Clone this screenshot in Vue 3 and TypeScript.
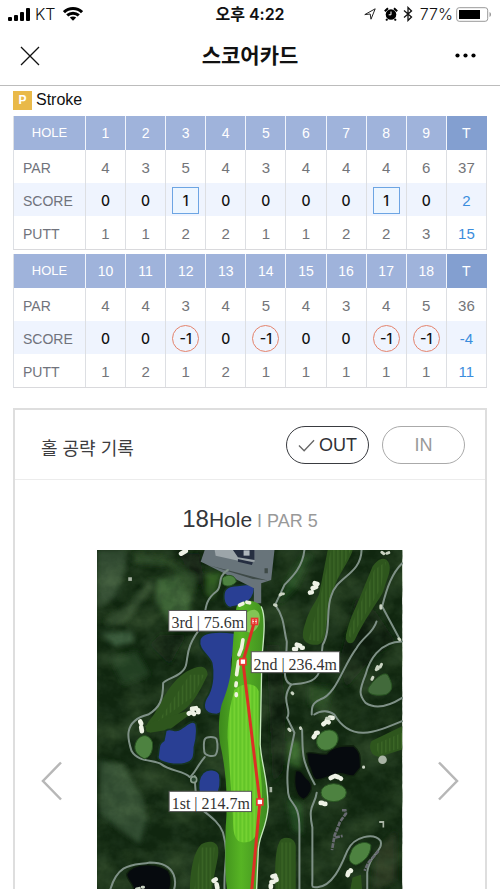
<script setup lang="ts">
import { ref } from 'vue'

interface Nine {
  holes: number[]
  par: number[]
  score: number[]
  putt: number[]
  totals: { par: number; score: number; putt: number }
}

const nines: Nine[] = [
  {
    holes: [1, 2, 3, 4, 5, 6, 7, 8, 9],
    par: [4, 3, 5, 4, 3, 4, 4, 4, 6],
    score: [0, 0, 1, 0, 0, 0, 0, 1, 0],
    putt: [1, 1, 2, 2, 1, 1, 2, 2, 3],
    totals: { par: 37, score: 2, putt: 15 },
  },
  {
    holes: [10, 11, 12, 13, 14, 15, 16, 17, 18],
    par: [4, 4, 3, 4, 5, 4, 3, 4, 5],
    score: [0, 0, -1, 0, -1, 0, 0, -1, -1],
    putt: [1, 2, 1, 2, 1, 1, 1, 1, 1],
    totals: { par: 36, score: -4, putt: 11 },
  },
]

type Course = 'OUT' | 'IN'
const courses: Course[] = ['OUT', 'IN']
const selected = ref<Course>('OUT')

function markClass(score: number): string {
  if (score > 0) return 'mark over'
  if (score < 0) return 'mark under'
  return 'mark'
}
</script>

<template>
  <div class="screen">
    <div class="status">
      <div class="status-side">
        <svg class="signal" viewBox="0 0 22 13" aria-hidden="true">
          <rect x="0" y="9" width="4" height="4" rx="1" />
          <rect x="6" y="7" width="4" height="6" rx="1" />
          <rect x="12" y="4" width="4" height="9" rx="1" />
          <rect x="18" y="0" width="4" height="13" rx="1" />
        </svg>
        <span>KT</span>
        <svg class="wifi" viewBox="0 0 20 14" aria-hidden="true">
          <path d="M1 5.2C6 .4 14 .4 19 5.2" />
          <path d="M4.2 8.4c3.3-3 8.3-3 11.600 0" />
          <path d="M6.800 10.600c1.800-1.600 4.600-1.600 6.400 0L10 13.800z" class="dot" />
        </svg>
      </div>
      <div class="time">오후 4:22</div>
      <div class="status-side right">
        <svg class="location" viewBox="0 0 12 12" aria-hidden="true">
          <path d="M.8 6.600 11.200.8 7 11.200 6.200 6z" />
        </svg>
        <svg class="alarm" viewBox="0 0 14 14" aria-hidden="true">
          <circle cx="7" cy="7.500" r="5.300" />
          <path d="M.8 4.200 4 1.200M13.200 4.200 10 1.200M3.200 12l-1 1.500M10.800 12l1 1.500" class="line" />
          <path d="M7 4.500v3.300H4.700" class="hand" />
        </svg>
        <svg class="bluetooth" viewBox="0 0 10 16" aria-hidden="true">
          <path d="M1 4.500 8.500 11 5 14.500V1.500L8.500 5 1 11.500" />
        </svg>
        <span>77%</span>
        <svg class="battery" viewBox="0 0 36 15" aria-hidden="true">
          <rect x=".7" y=".7" width="31" height="13.600" rx="2.500" class="case" />
          <rect x="3" y="3" width="21" height="9" />
          <path d="M33.500 5v5c2-.8 2-4.200 0-5z" class="tip" />
        </svg>
      </div>
    </div>

    <header class="nav">
      <button type="button" class="icon-button" aria-label="닫기">
        <svg class="close" viewBox="0 0 20 20" aria-hidden="true"><path d="M1 1l18 18M19 1 1 19" /></svg>
      </button>
      <h1>스코어카드</h1>
      <button type="button" class="icon-button end" aria-label="더보기">
        <svg class="more" viewBox="0 0 21 5" aria-hidden="true">
          <circle cx="2.500" cy="2.500" r="2.100" />
          <circle cx="10.500" cy="2.500" r="2.100" />
          <circle cx="18.500" cy="2.500" r="2.100" />
        </svg>
      </button>
    </header>

    <main class="content">
      <div class="mode"><span class="badge">P</span>Stroke</div>

      <div class="tables">
        <table v-for="(nine, n) in nines" :key="n">
          <thead>
            <tr>
              <th scope="col" class="name">HOLE</th>
              <th v-for="hole in nine.holes" :key="hole" scope="col">{{ hole }}</th>
              <th scope="col" class="total">T</th>
            </tr>
          </thead>
          <tbody>
            <tr>
              <th scope="row">PAR</th>
              <td v-for="(v, i) in nine.par" :key="i">{{ v }}</td>
              <td>{{ nine.totals.par }}</td>
            </tr>
            <tr class="score">
              <th scope="row">SCORE</th>
              <td v-for="(v, i) in nine.score" :key="i"><span :class="markClass(v)">{{ v }}</span></td>
              <td class="sum">{{ nine.totals.score }}</td>
            </tr>
            <tr>
              <th scope="row">PUTT</th>
              <td v-for="(v, i) in nine.putt" :key="i">{{ v }}</td>
              <td class="sum">{{ nine.totals.putt }}</td>
            </tr>
          </tbody>
        </table>
      </div>

      <section class="card">
        <div class="card-head">
          <h2>홀 공략 기록</h2>
          <div class="toggle">
            <button
              v-for="course in courses"
              :key="course"
              type="button"
              :class="['pill', { active: selected === course }]"
              :aria-pressed="selected === course"
              @click="selected = course"
            >
              <svg v-if="selected === course" class="check" viewBox="0 0 18 13" aria-hidden="true">
                <path d="M1 6.500 6.500 12 17 1" />
              </svg>
              {{ course }}
            </button>
          </div>
        </div>

        <p class="hole-title"><span class="number">18</span><span class="word">Hole</span><span class="par">I PAR 5</span></p>

        <div class="viewer">
          <button type="button" class="arrow" aria-label="이전 홀">
            <svg viewBox="0 0 22 40" aria-hidden="true"><path d="M20 1.500 2 20l18 18.500" /></svg>
          </button>

          <svg class="map" viewBox="21 15 918 1392" role="img" aria-label="18번 홀 코스">
            <defs>
              <pattern id="mow" width="12" height="12" patternUnits="userSpaceOnUse">
                <rect width="4" height="12" fill="#b8ff58" opacity=".3" />
              </pattern>
              <pattern id="mow-dim" width="12" height="12" patternUnits="userSpaceOnUse">
                <rect width="4" height="12" fill="#699b45" opacity=".25" />
              </pattern>
              <linearGradient id="main-grass" x1="0" y1="0" x2="1" y2="0">
                <stop offset="0" stop-color="#3c891c" />
                <stop offset=".45" stop-color="#57b424" />
                <stop offset="1" stop-color="#3e8a20" />
              </linearGradient>
              <filter id="foliage" x="0" y="0" width="1" height="1">
                <feTurbulence type="fractalNoise" baseFrequency=".009 .012" numOctaves="5" seed="9" />
                <feColorMatrix values="0 0 0 0 .2  0 0 0 0 .34  0 0 0 0 .14  1.800 0 0 0 -.68" />
              </filter>
              <filter id="shadow" x="0" y="0" width="1" height="1">
                <feTurbulence type="fractalNoise" baseFrequency=".025" numOctaves="4" seed="4" />
                <feColorMatrix values="0 0 0 0 .02  0 0 0 0 .05  0 0 0 0 .02  0 2.200 0 0 -.85" />
              </filter>
              <filter id="soft"><feGaussianBlur stdDeviation="8" /></filter>
            </defs>

            <rect x="21" y="15" width="918" height="1392" fill="#10260f" />

            <g filter="url(#soft)">
              <path d="M21 15h90l-5 60-30 85-55 25z" fill="#324b33" />
              <path d="M200 105l60-15 45 65-10 60-55 20-40-60z" fill="#385e30" />
              <path d="M130 25l100 15 90 55-10 60-70-90-110-10z" fill="#274420" />
              <path d="M30 265l95-5 10 30-60 15z" fill="#3b5b3c" />
              <path d="M40 230l90-60 50-70 10 30-90 110z" fill="#2d472a" />
              <path d="M60 340l80-20 40 70-80 30z" fill="#213f24" />
              <path d="M30 650l70 10 60 110 10 60-20 70-120-90z" fill="#304e33" />
              <path d="M350 85l50-5-30 80-20-10z" fill="#315d24" />
              <path d="M260 25l70 0 20 120-40-60z" fill="#09180b" />
              <path d="M210 270l80 0-50 90-60-60z" fill="#0b1e10" />
              <path d="M640 30l30 0-50 100-50 50 20-70z" fill="#1f451b" />
              <path d="M600 590l30 0 5 80-40-10z" fill="#336525" />
              <path d="M660 420l70 10-20 70-50-20z" fill="#20451d" />
              <path d="M590 760l50 20 0 90-30-10z" fill="#244b20" />
              <path d="M860 920l60-60v150l-70 30z" fill="#26331e" />
              <path d="M530 300l40 0 20 200-10 180-30 40z" fill="#0a1c0b" />
              <path d="M800 160l60 40 60 90-70 50-80 90-20-80z" fill="#0b1b0c" />
            </g>
            <rect x="21" y="15" width="918" height="1392" filter="url(#foliage)" opacity=".35" />
            <rect x="21" y="15" width="918" height="1392" filter="url(#shadow)" opacity=".45" />

            <!-- neighbouring fairways -->
            <g fill="#2e561d">
              <path d="M715 15h75c-5 25-42 75-52 105-12 35-20 60-27 125-5 55-20 58-45 54-30-6-30-30-18-65 15-50 35-65 42-90z" />
              <path d="M850 65c30-45 60-20 50 20l-20 60c-20 35-55 80-83 140-10 20-32 10-27-15 15-60 30-80 45-120z" />
              <path d="M292 380c35-20 60-20 62 10l-20 40c-40 75-65 70-120 112l-30 20c-22 8-18-20-5-35 30-30 50-110 113-147z" />
              <path d="M335 900c20-12 45-10 50 10 5 30-10 60-20 140l-65 5c0-50 5-125 35-155z" />
              <path d="M575 885c22-10 42 0 44 20v190h-60c0-70-10-180 16-210z" />
              <path d="M847 590l92-45v70l-60 20c-30 10-45-25-32-45z" />
              <path d="M790 1000l25-8 5 60h-40z" />
              <path d="M165 545l25-15 100-30 10 10-60 45-60 10z" />
            </g>
            <g fill="url(#mow-dim)">
              <path d="M725 15h60l-50 105-27 125-15 45-35-5 35-130z" />
              <path d="M855 75l35-25-15 80-90 150-10-10z" />
              <path d="M300 390l45 0-40 70-100 70z" />
              <path d="M335 910l40 0-15 150h-50z" />
              <path d="M570 895h40v180h-45z" />
              <path d="M857 600l82-35v45l-70 20z" />
            </g>

            <!-- water -->
            <g fill="#293f94" stroke="#17351f" stroke-width="5">
              <path d="M403 145c5-25 30-22 75-27 25 0 18 25 8 42l-20 20-40 7c-12 5-28-12-23-42z" />
              <path d="M330 285c10-30 70-25 108-20 5 30-8 60-12 85l0 70c-5 40-15 85-45 90-45 0-45-30-25-60 15-30 15-70 10-95-10-25-42-40-36-70z" />
              <path d="M228 558c20-12 25 10 45-5 20-15 38-30 46-15 5 25 2 45-5 70 0 25 0 45-30 50-20 5-80 0-80-20 5-25 0-40 18-50z" />
              <path d="M340 685c15-15 42-10 50 5 5 25 0 50-10 65h-50c-8-35-5-55 10-70z" />
            </g>
            <g fill="#060a0e" stroke="#10210e" stroke-width="4">
              <path d="M652 627c15-8 30 5 60 2 20-25 50-25 80-25 25 20 20 35 22 65l-20 25c-15 5-30-10-50-5-30 5-45 20-65 17-15-10-10-30-22-45z" />
              <path d="M618 680c20-8 22 15 42 30 15 20 0 45-17 55-20-5-33-35-25-85z" />
              <path d="M110 990c20-35 90-35 125-10 12 20 10 45 0 70H130c10-25-20-40-20-60z" />
            </g>

            <!-- club house -->
            <path d="M345 15h210l-10 90-30 10v60h-22v-45l-150-75-10-5z" fill="#68747a" />
            <path d="M375 15h120v35l-35 0-82-18z" fill="#9ca5a9" />
            <path d="M430 15h65v30l-50-8zM445 42l45 10-3 8-42-10z" fill="#252e40" />
            <path d="M462 16h18v16h-18z" fill="#aeb6bc" />
            <path d="M525 70h10v15h-10zM360 62l130 40 45 5" fill="#3e4a47" />

            <!-- cart paths -->
            <g class="paths">
              <path d="M415 75c-35 20-15 50-35 65-40 30-30 60-40 100-50 60-45 90-50 115-5 40-60 45-70 60 0 50-10 75-45 95-80 20-60 80-50 110 20 35 70 25 90 40 25 20 70 20 85 38 15-10 20-30 45-60" />
              <path d="M345 585c5-10 32-10 36 0 4 15 4 40-5 48-10 5-30 0-32-10-2-15-2-30 1-38z" />
              <path d="M315 695c2 35 0 65 20 100 25 20 55 40 65 70 20 70 0 100 5 185" />
              <path d="M60 1040c25-90 75-75 120-85 80 0 90 60 60 110" />
              <path d="M645 15c-5 50-35 80-60 105l-28 60c30 40 25 75 35 110 0 70-20 120 15 130 35-5 80-5 85-50l8-70c25-40 10-110 25-145 15-60 90-65 92-140" />
              <path d="M605 420c-35 50 5 75-12 100l22 45c-15 75-25 105-20 165 0 60 35 30 35 125v180" />
              <path d="M862 230c-10 35-40 45-60 80-40 50-60 140-110 155-25 10-25 25-25 45" />
              <path d="M638 555c3 70-5 85 38 165" />
              <path d="M682 745c-5 40-28 35-13 105v155c0 25-5 25 15 25 50-5 75-75 90-110 20-45 80-55 100-30 10 30-35 40-40 95v60" />
              <path d="M939 55c-30 30-45 70-60 130l52 97" />
              <path d="M939 290c-70 0-100 60-110 100-20 50-20 60 0 85 30 20 70 10 110-15" />
              <path d="M675 510c20-15 45-12 60 0 50 85 120 55 204 20" />
            </g>

            <!-- greens -->
            <g fill="#4d8240" stroke="#295522" stroke-width="3">
              <path d="M398 100c15-15 40-10 42 10-10 15-30 17-40 8z" />
              <path d="M140 590c15-25 40-20 48 5 2 30-10 45-25 48-25-12-35-30-23-53z" />
              <ellipse cx="714" cy="587" rx="34" ry="29" transform="rotate(-35 714 587)" />
              <ellipse cx="733" cy="745" rx="38" ry="27" />
              <path d="M785 925c5-25 45-40 60-22 0 30-20 50-45 60-20-5-25-20-15-38z" />
              <path d="M838 430c15-25 45-50 57-40 20 35 15 50-5 60-30 5-60 0-52-20z" fill="#426a3b" />
            </g>

            <!-- bunkers -->
            <g class="sand">
              <path d="M274 26l14-8M662 143l5-1M670 130l10-4M676 115l8 2" />
              <path d="M614 313l6 0M622 300l10 3M637 309l3 0" />
              <path d="M297 507l3-2M309 505l4 3M307 493l12-2M326 497l0 6" />
              <path d="M151 531l3 6M154 548l2 12" />
              <path d="M702 539l4-3M712 528l6 5M722 519l8 1" />
              <path d="M673 578l3-4M680 566l5-1" />
              <path d="M724 701l6-3M737 695l9 3M754 702l1 1" />
              <path d="M694 776l4 0M705 779l3 0" />
              <path d="M549 997l8-2M560 1003l1 5M546 1014l6-1M544 1024l0 5" />
              <path d="M775 993l3-9M784 979l1 1" />
              <path d="M372 1010l6-4M381 1021l2 10M386 1043l0 2" />
            </g>
            <g class="sand small">
              <path d="M848 404l3-6M861 375l6-3M873 367l4-8M862 372l3-6" />
              <path d="M878 22l6 4M893 25l6-2M875 183l0 7M929 282l3 3" />
              <path d="M555 180l5 2M572 150l5-3M581 147l1 0M598 554l4 4M633 550l1 2" />
              <path d="M140 1035l8-2M157 1030l4 0M712 521l8 1M608 445l2 2M823 668l0 1" />
            </g>
            <g fill="#a9b4a5">
              <rect x="115" y="97" width="11" height="11" />
              <circle cx="880" cy="646" r="13" />
              <path d="M540 728h8v16h-8zM870 830h15v20h-5v-14h-10z" />
              <circle cx="312" cy="706" r="9" fill="#28462e" stroke="#889c8c" stroke-width="5" />
            </g>
            <path d="M758 798h10l2 10-18 25-16 40-8 45M738 880l22-5" class="ridge" />
            <path d="M868 920l-30 35-12 25" class="ridge" />

            <!-- hole 18 -->
            <path
              d="M440 190C445 165 500 160 515 185C530 215 523 275 517 340L512 600C517 670 534 690 536 788C531 858 504 878 506 928L492 1407H398L412 1035C404 980 408 900 408 850C416 760 408 680 396 620C384 570 386 520 396 480C420 420 424 390 427 345C432 275 433 250 440 190z"
              fill="url(#main-grass)"
            />
            <path
              d="M435 435c30-25 65-20 72 5l0 170c8 95 15 140 5 205-5 60-20 80-48 80-30 0-34-30-34-75l-16-240c0-60 8-100 21-145z"
              fill="#63c528"
            />
            <path
              d="M435 435c30-25 65-20 72 5l0 170c8 95 15 140 5 205-5 60-20 80-48 80-30 0-34-30-34-75l-16-240c0-60 8-100 21-145z"
              fill="url(#mow)"
            />
            <path d="M470 205c25-20 43-8 41 20-3 30-25 45-40 35-20-10-15-40-1-55z" fill="#82c555" />
            <path d="M515 185C530 215 523 275 517 340L512 600C517 670 534 690 536 788C531 858 504 878 506 928L500 1060" class="edge" />
            <path d="M450 181l10-5M472 172l8 2M460 285l-4 25-8 20M447 350l-6 40M440 415l-1 8M440 448l0 5" class="edge sandline" />

            <!-- shots -->
            <path d="M495 230 460 351 511 773 478 1130" class="shot" />
            <g class="node">
              <rect x="486" y="221" width="18" height="18" />
              <rect x="451" y="342" width="18" height="18" />
              <rect x="502" y="764" width="18" height="18" />
            </g>
            <path d="M489 226l12 0M489 234l12 0M495 221v18" stroke="#e7372f" stroke-width="4" />

            <g class="tag">
              <rect x="237" y="197" width="234" height="62" />
              <text x="245" y="249">3rd | 75.6m</text>
              <rect x="485" y="321" width="266" height="63" />
              <text x="492" y="375">2nd | 236.4m</text>
              <rect x="238" y="741" width="248" height="61" />
              <text x="246" y="793">1st | 214.7m</text>
            </g>
          </svg>

          <button type="button" class="arrow" aria-label="다음 홀">
            <svg viewBox="0 0 22 40" aria-hidden="true"><path d="M2 1.500 20 20 2 38.500" /></svg>
          </button>
        </div>
      </section>
    </main>
  </div>
</template>

<style>
body {
  background: #fff;
}
</style>

<style scoped>
.screen {
  display: flex;
  flex-direction: column;
  height: 100vh;
  overflow: hidden;
  font-family: "Liberation Sans", "Noto Sans CJK KR", sans-serif;
  color: #111;
}

button {
  margin: 0;
  padding: 0;
  border: 0;
  background: none;
  font: inherit;
  color: inherit;
  cursor: pointer;
}

svg {
  display: block;
  flex: none;
}

.status {
  display: grid;
  grid-template-columns: 1fr auto 1fr;
  align-items: center;
  height: 28px;
  padding: 0 8px;
  font-family: Inter, "Noto Sans CJK KR", sans-serif;
  font-size: 16px;
  line-height: 28px;
}

.status-side {
  display: flex;
  align-items: center;
  gap: 5px;
  font-weight: 300;
}

.status-side .wifi {
  margin-left: 2px;
}

.right {
  justify-content: flex-end;
}

.time {
  font-weight: 600;
}

.signal {
  width: 22px;
  height: 13px;
}

.wifi {
  width: 20px;
  height: 14px;
  fill: none;
  stroke: #000;
  stroke-width: 3;
}

.wifi .dot {
  fill: #000;
  stroke: none;
}

.location {
  width: 12px;
  height: 12px;
  fill: none;
  stroke: #222;
  stroke-width: 1;
}

.alarm {
  width: 14px;
  height: 14px;
  margin-left: 3px;
}

.alarm .line {
  stroke: #000;
  stroke-width: 2;
}

.alarm .hand {
  fill: none;
  stroke: #fff;
  stroke-width: 1;
}

.bluetooth {
  width: 10px;
  height: 16px;
  margin-right: 2px;
  fill: none;
  stroke: #111;
  stroke-width: 1.3;
}

.battery {
  width: 36px;
  height: 15px;
  margin-left: -2px;
}

.battery .case {
  fill: none;
  stroke: #999;
}

.battery .tip {
  fill: #999;
}

.nav {
  display: grid;
  grid-template-columns: 1fr auto 1fr;
  align-items: center;
  box-sizing: border-box;
  flex: none;
  height: 58px;
  padding: 0 20px 2px;
  border-bottom: 1px solid #bcbcbc;
}

h1 {
  margin: 0;
  font-size: 21px;
  line-height: 30px;
  font-weight: 700;
}

.icon-button {
  justify-self: start;
}

.icon-button.end {
  justify-self: end;
  padding-right: 4px;
}

.close {
  width: 20px;
  height: 20px;
  stroke: #111;
  stroke-width: 1.3;
}

.more {
  width: 21px;
  height: 5px;
}

.content {
  flex: 1;
  min-height: 0;
  padding: 0 13px;
  overflow-y: auto;
  scrollbar-width: none;
}

.mode {
  display: flex;
  align-items: center;
  gap: 4px;
  height: 28px;
  padding-bottom: 2px;
  font-size: 16px;
}

.badge {
  width: 19px;
  height: 19px;
  background: #e9b949;
  color: #fff;
  font-size: 12px;
  line-height: 19px;
  font-weight: 700;
  text-align: center;
}

.tables {
  display: grid;
  gap: 4px;
}

table {
  width: 100%;
  table-layout: fixed;
  border-collapse: separate;
  border-spacing: 0;
  border-left: 1px solid #dde0e5;
  border-bottom: 1px solid #d9d9dc;
  font-size: 15px;
  color: #737579;
}

th,
td {
  height: 33px;
  padding: 0;
  border-right: 1px solid #dddfe3;
  text-align: center;
  line-height: 20px;
  font-weight: 400;
}

tbody th,
tbody td {
  box-sizing: border-box;
  padding-top: 2px;
}

thead th {
  height: 34px;
  border-right-color: #f1f5fc;
  background: #9fb3db;
  color: #fff;
  font-size: 14px;
}

thead .name {
  width: 15%;
  font-size: 13px;
}

thead .total {
  background: #839fd0;
  border-right-color: #839fd0;
}

tbody th {
  padding-left: 9px;
  text-align: left;
  font-size: 14px;
  color: #70737c;
}

.score th,
.score td {
  background: #eff4fe;
}

.mark {
  display: inline-block;
  box-sizing: border-box;
  width: 27px;
  height: 27px;
  border: 1px solid transparent;
  font-family: Inter, sans-serif;
  font-size: 14px;
  font-weight: 500;
  line-height: 25px;
  color: #111;
  vertical-align: middle;
}

.over {
  border-color: #6da5e3;
  background: #edf6ff;
}

.under {
  border-color: #e4836c;
  border-radius: 50%;
}

.sum {
  color: #3b8ddd;
}

.card {
  margin-top: 20px;
  border: 2px solid #dedede;
  border-bottom: 0;
}

.card-head {
  display: flex;
  align-items: center;
  justify-content: space-between;
  height: 69px;
  padding: 0 20px 0 26px;
  border-bottom: 1px solid #ececec;
}

h2 {
  margin: 0;
  padding-top: 8px;
  font-size: 18px;
  line-height: 26px;
  font-weight: 400;
  color: #3d3d3f;
}

.toggle {
  display: flex;
  gap: 13px;
}

.pill {
  display: flex;
  align-items: center;
  justify-content: center;
  gap: 4px;
  box-sizing: border-box;
  width: 83px;
  height: 38px;
  padding-top: 2px;
  border: 1px solid #aaa;
  border-radius: 19px;
  font-size: 18px;
  color: #999;
}

.pill.active {
  border: 1px solid #393b40;
  color: #2f3136;
}

.check {
  width: 17px;
  height: 13px;
  fill: none;
  stroke: #666;
  stroke-width: 1.4;
}

.hole-title {
  display: flex;
  align-items: baseline;
  justify-content: center;
  margin: 0;
  padding: 24px 0 14px;
  line-height: 30px;
  color: #34363a;
}

.number {
  font-size: 24px;
}

.word {
  font-size: 21px;
}

.par {
  padding-left: 5px;
  font-size: 18px;
  color: #999;
}

.viewer {
  display: flex;
  align-items: center;
  justify-content: space-between;
  padding: 0 26px;
}

.arrow svg {
  width: 22px;
  height: 40px;
  fill: none;
  stroke: #b7b7b7;
  stroke-width: 2.5;
}

.map {
  width: 73%;
}

.paths path {
  fill: none;
  stroke: #7f9187;
  stroke-width: 6;
  stroke-linecap: round;
  stroke-linejoin: round;
}

.sand path {
  fill: none;
  stroke: #eef2e6;
  stroke-width: 14;
  stroke-linecap: round;
  stroke-linejoin: round;
}

.sand.small path {
  stroke: #c9d3c2;
  stroke-width: 9;
}

.ridge {
  fill: none;
  stroke: #676a70;
  stroke-width: 8;
  stroke-dasharray: 14 3;
}

.edge {
  fill: none;
  stroke: #c6e8bd;
  stroke-width: 4;
}

.sandline {
  stroke: #f0f3df;
  stroke-width: 11;
  stroke-linecap: round;
}

.shot {
  fill: none;
  stroke: #dc3025;
  stroke-width: 9;
}

.node rect {
  fill: #fff;
  stroke: #e7372f;
  stroke-width: 5;
}

.tag rect {
  fill: #fff;
  stroke: #555;
  stroke-width: 3;
}

.tag text {
  font-family: "Liberation Serif", serif;
  font-size: 48px;
  fill: #333;
}
</style>
